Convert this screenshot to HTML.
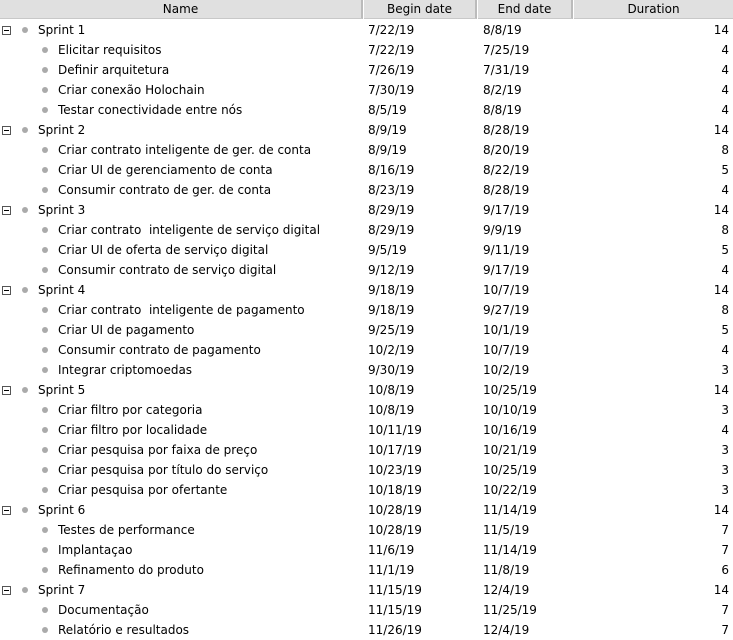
<!DOCTYPE html><html><head><style>
body{margin:0;width:733px;height:638px;overflow:hidden;background:#fff;font-family:"DejaVu Sans",sans-serif;font-size:12px;color:#000;position:relative}
.h{position:absolute;top:0;height:19px;background:#e0e0e0;border-bottom:1px solid #c8c8c8;text-align:center;line-height:19px;box-sizing:border-box}
.r{position:absolute;left:0;width:733px;height:20px;line-height:20px}
.r span{position:absolute;white-space:nowrap}
.b{position:absolute;width:6px;height:6px;border-radius:50%;background:#aaa;top:7px}
.m{position:absolute;left:2px;top:6px;width:7px;height:7px;border:1px solid #555;background:#fff}
.m:after{content:"";position:absolute;left:1px;top:3px;width:5px;height:1px;background:#000}
</style></head><body>
<div class="h" style="left:0;width:363px;border-right:2px solid #bbb">Name</div>
<div class="h" style="left:364px;width:113px;border-right:2px solid #bbb">Begin date</div>
<div class="h" style="left:478px;width:95px;border-right:2px solid #bbb">End date</div>
<div class="h" style="left:574px;width:159px">Duration</div>
<div id="rows"></div>
<script>
var d=[[1,"Sprint 1","7/22/19","8/8/19",14],[0,"Elicitar requisitos","7/22/19","7/25/19",4],[0,"Definir arquitetura","7/26/19","7/31/19",4],[0,"Criar conexão Holochain","7/30/19","8/2/19",4],[0,"Testar conectividade entre nós","8/5/19","8/8/19",4],
[1,"Sprint 2","8/9/19","8/28/19",14],[0,"Criar contrato inteligente de ger. de conta","8/9/19","8/20/19",8],[0,"Criar UI de gerenciamento de conta","8/16/19","8/22/19",5],[0,"Consumir contrato de ger. de conta","8/23/19","8/28/19",4],
[1,"Sprint 3","8/29/19","9/17/19",14],[0,"Criar contrato&nbsp; inteligente de serviço digital","8/29/19","9/9/19",8],[0,"Criar UI de oferta de serviço digital","9/5/19","9/11/19",5],[0,"Consumir contrato de serviço digital","9/12/19","9/17/19",4],
[1,"Sprint 4","9/18/19","10/7/19",14],[0,"Criar contrato&nbsp; inteligente de pagamento","9/18/19","9/27/19",8],[0,"Criar UI de pagamento","9/25/19","10/1/19",5],[0,"Consumir contrato de pagamento","10/2/19","10/7/19",4],[0,"Integrar criptomoedas","9/30/19","10/2/19",3],
[1,"Sprint 5","10/8/19","10/25/19",14],[0,"Criar filtro por categoria","10/8/19","10/10/19",3],[0,"Criar filtro por localidade","10/11/19","10/16/19",4],[0,"Criar pesquisa por faixa de preço","10/17/19","10/21/19",3],[0,"Criar pesquisa por título do serviço","10/23/19","10/25/19",3],[0,"Criar pesquisa por ofertante","10/18/19","10/22/19",3],
[1,"Sprint 6","10/28/19","11/14/19",14],[0,"Testes de performance","10/28/19","11/5/19",7],[0,"Implantaçao","11/6/19","11/14/19",7],[0,"Refinamento do produto","11/1/19","11/8/19",6],
[1,"Sprint 7","11/15/19","12/4/19",14],[0,"Documentação","11/15/19","11/25/19",7],[0,"Relatório e resultados","11/26/19","12/4/19",7]];
var h="";d.forEach(function(r,i){var t=20+i*20;h+='<div class="r" style="top:'+t+'px">'+(r[0]?'<div class="m"></div><div class="b" style="left:22px"></div><span style="left:38px">':'<div class="b" style="left:42px"></div><span style="left:58px">')+r[1]+'</span><span style="left:368px">'+r[2]+'</span><span style="left:483px">'+r[3]+'</span><span style="right:4px">'+r[4]+'</span></div>';});
document.getElementById("rows").innerHTML=h;
</script>
</body></html>
